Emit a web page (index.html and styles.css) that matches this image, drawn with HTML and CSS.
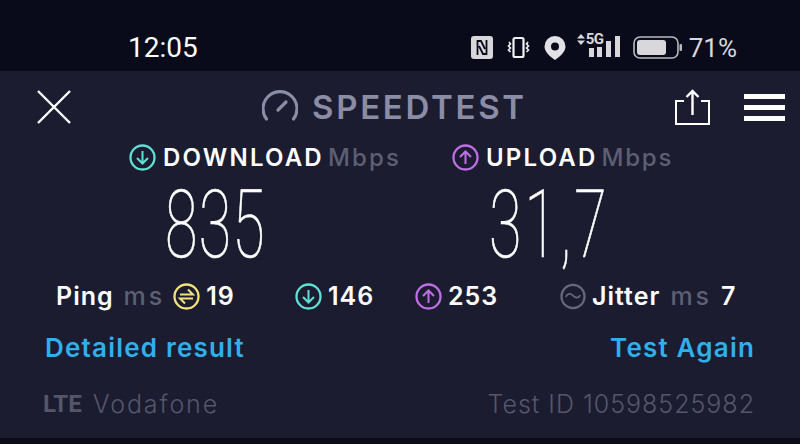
FILE: index.html
```html
<!DOCTYPE html>
<html lang="en">
<head>
    <meta charset="UTF-8">
    <meta name="viewport" content="width=device-width, initial-scale=1.0">
    <title>Speedtest</title>
    <link rel="stylesheet" href="styles.css">
</head>
<body>
    <div class="status-bar">
        <span class="clock">12:05</span>
        <div class="status-icons">
            <svg class="icon-nfc" width="22" height="23" viewBox="0 0 22 23"><rect width="22" height="23" rx="3" fill="#d8d8dc"/><path d="M6.500 19V5h3.500l4 8M15.500 4v14H12L8 10" fill="none" stroke="#0a0b1a" stroke-width="1.800"/></svg>
            <svg class="icon-vibrate" width="23" height="23" viewBox="0 0 23 23"><rect x="6.500" y="2" width="10" height="19" rx="1.500" fill="none" stroke="#f2f2f4" stroke-width="2.200"/><path d="M2 6l1.500 2L1.500 10l2 2-2 2 2 2M21 6l-1.500 2 2 2-2 2 2 2-2 2" fill="none" stroke="#f2f2f4" stroke-width="1.600"/></svg>
            <svg class="icon-pin" width="22" height="24" viewBox="0 0 22 24"><path fill-rule="evenodd" d="M11 0a10.500 10.500 0 0 1 10.500 10.500c0 5-5 10-10.500 13.500C5.500 20.500.5 15.500.5 10.500A10.500 10.500 0 0 1 11 0zm0 6.500a4 4 0 1 0 0 8 4 4 0 0 0 0-8z" fill="#e2e2e6"/></svg>
            <div class="net">
                <svg class="net-arrows" width="8" height="11" viewBox="0 0 8 11"><path d="M4 0l4 4.500H0zM4 11L0 6.500h8z" fill="#d8d8dc"/></svg>
                <span class="net-label">5G</span>
                <svg class="net-bars" width="32" height="21" viewBox="0 0 32 21"><path d="M0 12h5v9H0zM8 11h5v10H8zM17 5h5v16h-5zM26 0h5v21h-5z" fill="#d8d8dc"/></svg>
            </div>
            <svg class="icon-battery" width="49" height="23" viewBox="0 0 49 23"><rect x="1" y="1" width="44" height="21" rx="6" fill="none" stroke="#b9b9bf" stroke-width="1.600"/><rect x="4" y="4" width="29" height="15" rx="3" fill="#d8d8dc"/><rect x="46.500" y="8" width="2.500" height="7" rx="1" fill="#b9b9bf"/></svg>
            <span class="battery-text">71%</span>
        </div>
    </div>

    <main class="app">
        <header class="top-bar">
            <svg width="34" height="34" viewBox="0 0 34 34"><path d="M1 1l32 32M33 1L1 33" stroke="#fff" stroke-width="2.400" fill="none"/></svg>
            <div class="brand">
                <svg width="36" height="34" viewBox="0 0 36 34"><path d="M4.500 29A17 17 0 1 1 31.500 29" fill="none" stroke="#8b8ca6" stroke-width="3.200" stroke-linecap="round"/><path d="M16 20l8-8" stroke="#8b8ca6" stroke-width="3.200" stroke-linecap="round" fill="none"/></svg>
                <span class="brand-name">SPEEDTEST</span>
            </div>
            <svg class="share" width="35" height="36" viewBox="0 0 35 36"><path d="M9 12H1v23h33V12h-8" fill="none" stroke="#fff" stroke-width="2"/><path d="M17.500 26V2M11.500 8l6-6 6 6" fill="none" stroke="#fff" stroke-width="2.400"/></svg>
            <div class="menu"><i></i><i></i><i></i></div>
        </header>

        <section class="speeds">
            <div class="speed">
                <div class="speed-label">
                    <svg width="27" height="27" viewBox="0 0 27 27"><circle cx="13.500" cy="13.500" r="12" fill="none" stroke="#5fe0d4" stroke-width="2.300"/><path d="M13.500 7v12M8 14l5.500 5.500L19 14" fill="none" stroke="#5fe0d4" stroke-width="2"/></svg>
                    <b>DOWNLOAD</b><span class="unit">Mbps</span>
                </div>
                <div class="speed-value">835</div>
            </div>
            <div class="speed">
                <div class="speed-label">
                    <svg width="27" height="27" viewBox="0 0 27 27"><circle cx="13.500" cy="13.500" r="12" fill="none" stroke="#c06ee6" stroke-width="2.300"/><path d="M13.500 20V8M8 13l5.500-5.500L19 13" fill="none" stroke="#c06ee6" stroke-width="2"/></svg>
                    <b>UPLOAD</b><span class="unit unit-up">Mbps</span>
                </div>
                <div class="speed-value value-up">31,7</div>
            </div>
        </section>

        <section class="stats">
            <div class="stat">
                <b>Ping</b><span class="unit">ms</span>
                <svg width="27" height="27" viewBox="0 0 27 27"><circle cx="13.500" cy="13.500" r="12" fill="none" stroke="#f2e27a" stroke-width="2.300"/><path d="M7 11.500h13l-5-5M20 15.500H7l5 5" fill="none" stroke="#f2e27a" stroke-width="2"/></svg>
                <b>19</b>
            </div>
            <div class="stat">
                <svg width="27" height="27" viewBox="0 0 27 27"><circle cx="13.500" cy="13.500" r="12" fill="none" stroke="#5fe0d4" stroke-width="2.300"/><path d="M13.500 7v12M8 14l5.500 5.500L19 14" fill="none" stroke="#5fe0d4" stroke-width="2"/></svg>
                <b>146</b>
            </div>
            <div class="stat">
                <svg width="27" height="27" viewBox="0 0 27 27"><circle cx="13.500" cy="13.500" r="12" fill="none" stroke="#c06ee6" stroke-width="2.300"/><path d="M13.500 20V8M8 13l5.500-5.500L19 13" fill="none" stroke="#c06ee6" stroke-width="2"/></svg>
                <b>253</b>
            </div>
            <div class="stat">
                <svg width="26" height="27" viewBox="0 0 27 27"><circle cx="13.500" cy="13.500" r="12" fill="none" stroke="#66677a" stroke-width="2.300"/><path d="M6 14c2-4 5-4 7.500-1.500S19 16 21 12" fill="none" stroke="#66677a" stroke-width="1.800"/></svg>
                <b>Jitter</b><span class="unit">ms</span><b class="jitter-value">7</b>
            </div>
        </section>

        <div class="links">
            <a class="link">Detailed result</a>
            <a class="link">Test Again</a>
        </div>

        <footer class="foot">
            <div class="carrier"><span class="lte">LTE</span><span class="carrier-name">Vodafone</span></div>
            <span class="test-id">Test ID 10598525982</span>
        </footer>
    </main>
    <div class="bottom-strip"></div>
</body>
</html>
```

FILE: styles.css
```css
* {
    box-sizing: border-box;
}
body {
    margin: 0;
    width: 800px;
    height: 444px;
    overflow: hidden;
    display: flex;
    flex-direction: column;
    background-color: #1b1c30;
    color: #fff;
    font-family: Inter, "Open Sans", sans-serif;
}
svg {
    display: block;
    flex: none;
}

/* status bar */
.status-bar {
    height: 71px;
    flex: none;
    background-color: #0a0b1a;
    display: flex;
    justify-content: space-between;
    align-items: center;
    padding: 24px 63px 0 128px;
    font-family: Roboto, sans-serif;
}
.clock {
    font-size: 28px;
}
.status-icons {
    display: flex;
    align-items: center;
}
.icon-vibrate {
    margin-left: 14px;
}
.icon-pin {
    margin-left: 14px;
}
.net {
    display: flex;
    align-items: flex-start;
    margin-left: 10px;
    position: relative;
    width: 45px;
    height: 23px;
}
.net-arrows {
    position: absolute;
    left: 1px;
    top: -2px;
}
.net-label {
    position: absolute;
    left: 10px;
    top: -6px;
    font-size: 15px;
    font-weight: 700;
    letter-spacing: -0.5px;
    color: #d8d8dc;
}
.net-bars {
    margin-left: 13px;
}
.icon-battery {
    margin-left: 12px;
}
.battery-text {
    margin-left: 7px;
    font-size: 26px;
    color: #d8d8dc;
}

/* app */
.app {
    flex: 1;
    display: flex;
    flex-direction: column;
}
.top-bar {
    display: flex;
    align-items: center;
    height: 72px;
    padding: 0 15px 0 37px;
}
.brand {
    display: flex;
    align-items: center;
    gap: 14px;
    margin-left: 191px;
}
.brand-name {
    font-size: 33px;
    font-weight: 600;
    color: #8b8ca6;
    letter-spacing: 2.7px;
}
.share {
    margin-left: auto;
}
.menu {
    width: 41px;
    margin-left: 34px;
    display: flex;
    flex-direction: column;
    gap: 6px;
}
.menu i {
    display: block;
    height: 5px;
    background-color: #fff;
}

.speeds {
    display: grid;
    grid-template-columns: 323px 1fr;
    padding-left: 129px;
}
.speed-label {
    display: flex;
    align-items: center;
    height: 28px;
    font-size: 24px;
    letter-spacing: 2.2px;
}
.speed-label b {
    margin-left: 7px;
    font-weight: 600;
}
.unit {
    margin-left: 4px;
    color: #5e5f73;
    font-weight: 500;
}
.unit-up {
    letter-spacing: 1.8px;
}
.speed-value {
    height: 100px;
    margin-top: 4px;
    margin-left: 36px;
    font-family: Roboto, sans-serif;
    font-weight: 100;
    font-size: 94px;
    line-height: 100px;
    -webkit-text-stroke: 0.7px #fff;
    letter-spacing: 2px;
    transform: scaleX(0.63);
    transform-origin: left center;
}
.value-up {
    margin-left: 37px;
    letter-spacing: 5px;
}

.stats {
    display: grid;
    grid-template-columns: 239px 120px 145px 1fr;
    padding-left: 56px;
    margin-top: 6px;
    height: 30px;
    font-size: 25px;
    letter-spacing: 1px;
}
.stat {
    display: flex;
    align-items: center;
}
.stat b {
    font-weight: 600;
}
.stat .unit {
    margin-left: 10px;
    letter-spacing: 3px;
}
.stat svg {
    margin-left: 8px;
}
.stat svg:first-child {
    margin-left: 0;
}
.stat svg + b {
    margin-left: 6px;
}
.stat .jitter-value {
    margin-left: 9px;
}

.links {
    display: flex;
    justify-content: space-between;
    padding: 0 45px;
    margin-top: 21px;
    height: 30px;
    align-items: center;
    font-size: 26px;
    font-weight: 600;
    letter-spacing: 1.2px;
}
.link {
    color: #2fb0ec;
}

.foot {
    display: flex;
    justify-content: space-between;
    align-items: center;
    padding: 0 45px 0 43px;
    margin-top: 27px;
    height: 30px;
    font-size: 25px;
    font-weight: 300;
    color: #55566a;
}
.carrier {
    display: flex;
    align-items: center;
    gap: 11px;
}
.lte {
    font-weight: 700;
    font-size: 24px;
    font-family: Roboto, sans-serif;
}
.carrier-name {
    letter-spacing: 1.9px;
}
.test-id {
    letter-spacing: 1px;
}
.bottom-strip {
    height: 6px;
    flex: none;
    background-color: #0b0c18;
}
```
